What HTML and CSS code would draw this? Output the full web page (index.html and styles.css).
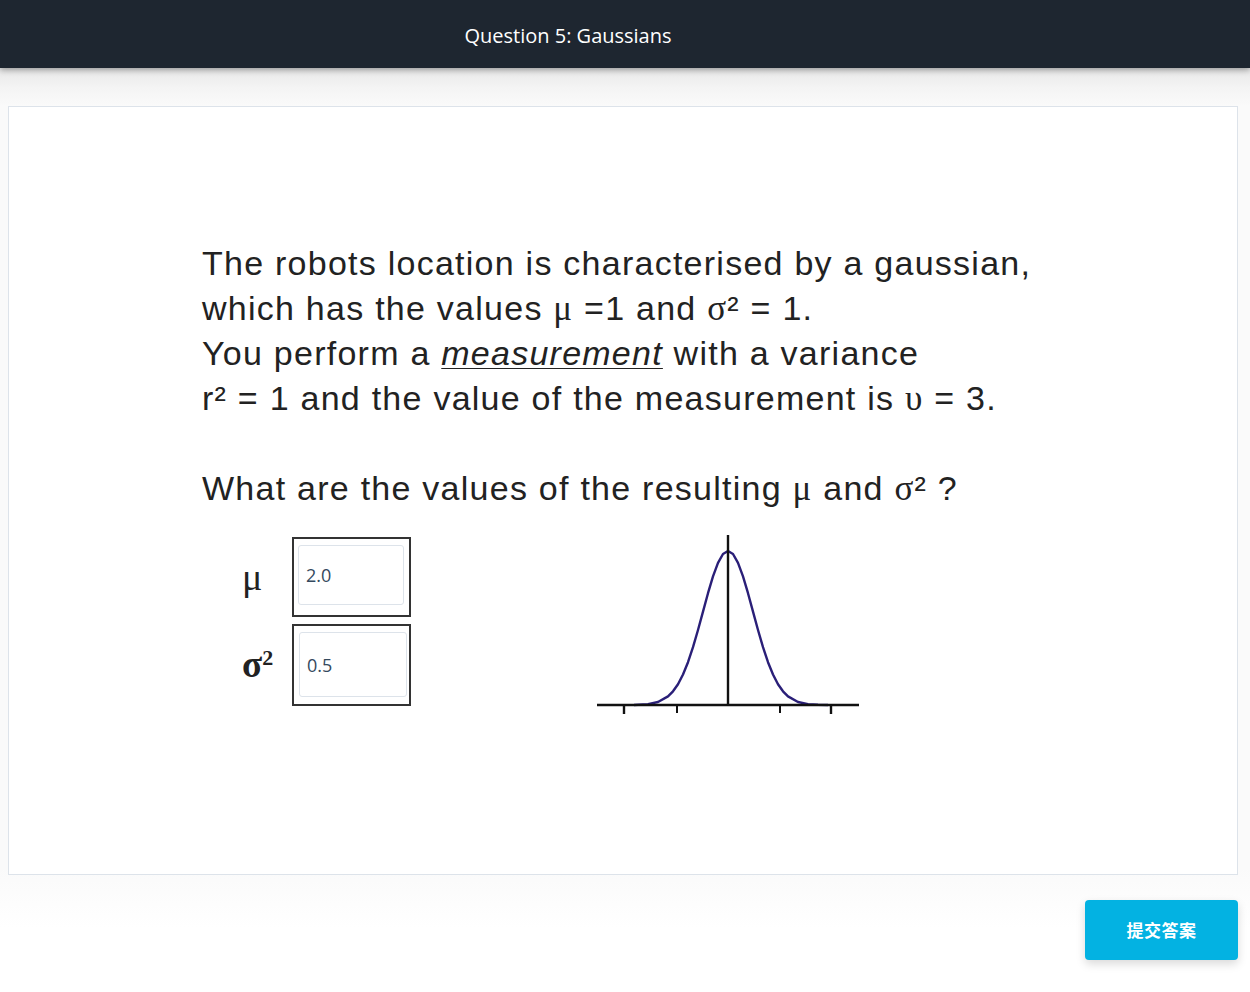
FILE: index.html
```html
<!DOCTYPE html>
<html lang="en">
<head>
<meta charset="utf-8">
<title>Question 5: Gaussians</title>
<link rel="stylesheet" href="styles.css">
</head>
<body>
<header class="topbar">
  <h1 class="topbar-title">Question 5: Gaussians</h1>
</header>
<main class="main">
  <section class="card">
    <div class="question">
      <p class="q-text">The robots location is characterised by a gaussian,<br>
      which has the values <span class="gr">μ</span> =1 and <span class="gr">σ</span>² = 1.<br>
      You perform a <em class="term">measurement</em> with a variance<br>
      r² = 1 and the value of the measurement is <span class="gr">υ</span> = 3.</p>
      <p class="q-text q-ask">What are the values of the resulting <span class="gr">μ</span> and <span class="gr">σ</span>² ?</p>
      <div class="answer-row">
        <div class="fields">
          <div class="field">
            <span class="field-label">μ</span>
            <div class="field-box"><input class="field-input" type="text" value="2.0"></div>
          </div>
          <div class="field field-second">
            <span class="field-label label-bold">σ<sup class="sq">2</sup></span>
            <div class="field-box box-second"><input class="field-input input-second" type="text" value="0.5"></div>
          </div>
        </div>
        <svg class="plot" width="266" height="184" viewBox="0 0 266 184">
          <polyline fill="none" stroke="#2a1f78" stroke-width="2.4" stroke-linejoin="round"
            points="39,172 43,171.8 53,171.1 63,169 73,163.4 78,158.3 83,151.2 88,141.5 93,129.2 98,114.2 103,97 108,78.6 113,60.2 118,43.4 123,29.8 128,21 133,18 138,21 143,29.8 148,43.4 153,60.2 158,78.6 163,97 168,114.2 173,129.2 178,141.5 183,151.2 188,158.3 193,163.4 203,169 213,171.1 223,171.8 233,172"/>
          <line x1="2" y1="172" x2="264" y2="172" stroke="#111" stroke-width="2.6"/>
          <line x1="133" y1="2" x2="133" y2="172" stroke="#111" stroke-width="2.4"/>
          <line x1="29" y1="172" x2="29" y2="181" stroke="#111" stroke-width="2.4"/>
          <line x1="82" y1="172" x2="82" y2="180" stroke="#111" stroke-width="2"/>
          <line x1="185" y1="172" x2="185" y2="180" stroke="#111" stroke-width="2"/>
          <line x1="236" y1="172" x2="236" y2="181" stroke="#111" stroke-width="2.4"/>
        </svg>
      </div>
    </div>
  </section>
  <div class="actions">
    <button class="submit" type="button">提交答案</button>
  </div>
</main>
</body>
</html>
```

FILE: styles.css
```css
html, body {
  margin: 0;
  padding: 0;
  background: #ffffff;
}

body {
  font-family: "Open Sans", "Noto Sans", sans-serif;
  color: #222;
}

.topbar {
  position: relative;
  z-index: 2;
  height: 68px;
  background: #1e2630;
  display: flex;
  align-items: center;
  justify-content: center;
  padding-right: 114px;
  box-shadow: 0 2px 6px rgba(0, 0, 0, 0.35);
}

.topbar-title {
  margin: 0;
  padding-top: 3px;
  font-family: "Open Sans", sans-serif;
  font-weight: 400;
  font-size: 20px;
  color: #ffffff;
}

.main {
  padding: 38px 12px 40px 8px;
  background: linear-gradient(#e8e8e8 0px, #f4f4f4 20px, #fafafa 38px, #fafafa 800px, #ffffff 860px);
}

.card {
  background: #ffffff;
  border: 1px solid #dde3ea;
  height: 767px;
  box-sizing: content-box;
}

.question {
  padding: 134px 0 0 193px;
}

.q-text {
  margin: 0;
  font-family: "Liberation Sans", Arial, sans-serif;
  font-size: 34px;
  line-height: 45px;
  color: #222;
  letter-spacing: 1.25px;
}

.q-ask {
  margin-top: 45px;
}

.gr {
  font-family: "Liberation Serif", "Times New Roman", serif;
  font-size: 35px;
}

.term {
  font-style: italic;
  text-decoration: underline;
  text-decoration-thickness: 1px;
  text-underline-offset: 3px;
}

.answer-row {
  display: flex;
  align-items: flex-start;
  margin-top: 22px;
  padding-left: 39px;
}

.fields {
  display: flex;
  flex-direction: column;
  gap: 7px;
  padding-top: 4px;
}

.field {
  display: flex;
  align-items: center;
}

.field-label {
  width: 51px;
  font-family: "Liberation Serif", "Times New Roman", serif;
  font-size: 38px;
  line-height: 40px;
  color: #222;
  padding-left: 1px;
  box-sizing: border-box;
}

.label-bold {
  font-weight: 700;
  font-size: 37px;
}

.sq {
  font-size: 22px;
  font-weight: 700;
  vertical-align: 12px;
  line-height: 0;
  margin-left: 0;
}

.field-box {
  width: 119px;
  height: 80px;
  box-sizing: border-box;
  border: 2px solid #333;
  padding: 6px 5px 10px 4px;
}

.box-second {
  height: 82px;
  padding: 6px 2px 7px 5px;
}

.field-input {
  display: block;
  width: 100%;
  height: 60px;
  box-sizing: border-box;
  border: 1px solid #dde3ea;
  border-radius: 3px;
  padding: 0 7px;
  font-family: "Open Sans", sans-serif;
  font-size: 18px;
  color: #34495e;
  background: #fff;
  outline: none;
}

.input-second {
  height: 65px;
}

.plot {
  display: block;
  margin-left: 184px;
}

.actions {
  display: flex;
  justify-content: flex-end;
  padding-top: 25px;
}

.submit {
  width: 153px;
  height: 60px;
  border: none;
  border-radius: 4px;
  background: #03b2e2;
  color: #ffffff;
  font-family: "Noto Sans CJK SC", sans-serif;
  font-weight: 700;
  font-size: 17px;
  letter-spacing: 0.5px;
  padding-bottom: 2px;
  box-shadow: 0 4px 10px rgba(0, 0, 0, 0.15);
  cursor: pointer;
}
```
